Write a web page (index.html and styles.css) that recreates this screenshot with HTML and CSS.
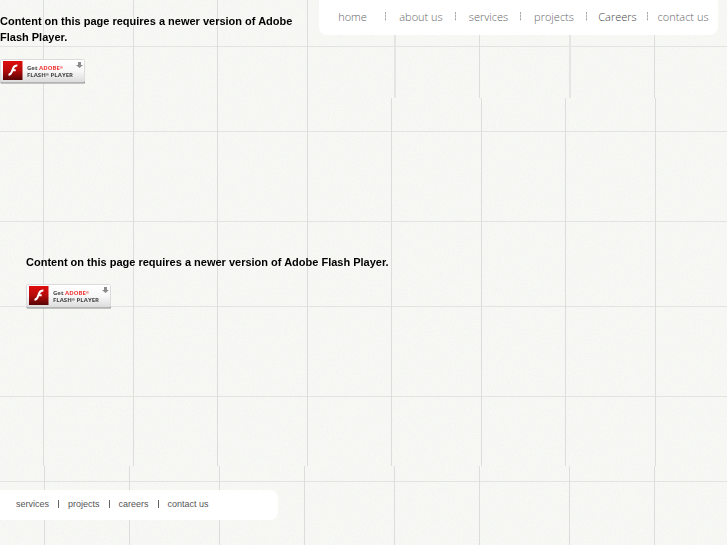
FILE: index.html
```html
<!DOCTYPE html>
<html lang="en">
<head>
<meta charset="utf-8">
<title>Home</title>
<link rel="stylesheet" href="styles.css">
</head>
<body>
<svg class="grain" aria-hidden="true">
  <filter id="grain"><feTurbulence type="fractalNoise" baseFrequency="0.6" numOctaves="2" seed="4"/></filter>
  <rect width="100%" height="100%" filter="url(#grain)"/>
</svg>
<svg class="defs" aria-hidden="true">
  <defs>
    <linearGradient id="plate" x2="0" y2="1"><stop offset="0" stop-color="#fff"/><stop offset=".5" stop-color="#f8f8f8"/><stop offset="1" stop-color="#dcdcdc"/></linearGradient>
    <linearGradient id="red" x2="0" y2="1"><stop offset="0" stop-color="#e00d0d"/><stop offset=".5" stop-color="#b60b0b"/><stop offset="1" stop-color="#560404"/></linearGradient>
    <symbol id="badge" viewBox="0 0 86 26">
      <rect x="0.500" y="2" width="84.500" height="22.500" rx="1" fill="#8d8d8d"/>
      <rect x="0.500" y="0.500" width="84" height="22.500" rx="1" fill="url(#plate)" stroke="#dcdcdc"/>
      <rect x="3" y="2" width="19.500" height="19" fill="url(#red)"/>
      <path d="M17.400 6.400c-3.400-.2-4.100 2-5 4.700-.8 2.600-1.500 4.500-3.900 4.600M11.700 11.200h4" fill="none" stroke="#fff" stroke-width="2"/>
      <path d="M78 3h3v3h2l-3.500 3L76 6h2z" fill="#8c8c8c"/>
    </symbol>
  </defs>
</svg>
<header class="header">
  <section class="notice">
    <h4>Content on this page requires a newer version of Adobe Flash Player.</h4>
    <a class="badge" href="#flash" aria-label="Get Adobe Flash Player">
      <svg viewBox="0 0 86 26"><use href="#badge"/><text x="27" y="11">Get <tspan class="brand">ADOBE<tspan class="mark" dy="-1">®</tspan></tspan></text><text x="27" y="18">FLASH<tspan class="mark" dy="-1">®</tspan><tspan dy="1"> PLAYER</tspan></text></svg>
    </a>
  </section>
  <div class="banner">
    <nav class="nav">
      <a href="#home">home</a>
      <a href="#about">about us</a>
      <a href="#services">services</a>
      <a href="#projects">projects</a>
      <a class="strong" href="#careers">Careers</a>
      <a href="#contact">contact us</a>
    </nav>
  </div>
</header>
<main class="main">
  <h4>Content on this page requires a newer version of Adobe Flash Player.</h4>
  <a class="badge" href="#flash" aria-label="Get Adobe Flash Player">
    <svg viewBox="0 0 86 26"><use href="#badge"/><text x="27" y="11">Get <tspan class="brand">ADOBE<tspan class="mark" dy="-1">®</tspan></tspan></text><text x="27" y="18">FLASH<tspan class="mark" dy="-1">®</tspan><tspan dy="1"> PLAYER</tspan></text></svg>
  </a>
</main>
<footer class="footer">
  <nav class="links">
    <a href="#services">services</a><i></i>
    <a href="#projects">projects</a><i></i>
    <a href="#careers">careers</a><i></i>
    <a href="#contact">contact us</a>
  </nav>
</footer>
</body>
</html>
```
FILE: styles.css
```css
* { box-sizing: border-box; }
body {
  --line: #dddedc;
  --soft: #e5e6e3;
  margin: 0;
  min-height: 100vh;
  display: flex;
  flex-direction: column;
  font-family: "Liberation Sans", Arial, sans-serif;
  font-size: 11px;
  line-height: 16px;
  color: #000;
  background:
    repeating-linear-gradient(transparent 0 46px, var(--soft) 46px 47px, transparent 47px 131px, var(--soft) 131px 132px, transparent 132px 175px),
    #f9faf6;
}
.grain {
  position: fixed;
  inset: 0;
  z-index: -1;
  width: 100%;
  height: 100%;
  opacity: 0.08;
}
.defs { position: absolute; width: 0; height: 0; }
.header { display: grid; grid-template-columns: 319fr 408fr; min-height: 98px; }
.notice, .main {
  background: repeating-linear-gradient(90deg, transparent 0 43px, var(--line) 43px 44px, transparent 44px 133px, var(--line) 133px 134px, transparent 134px 174px);
}
.notice { padding-top: 13px; }
.banner {
  padding-right: 9px;
  background: repeating-linear-gradient(90deg, transparent 0 75px, var(--soft) 75px 77px, transparent 77px 160px, var(--line) 160px 161px, transparent 161px 175px);
}
h4 { margin: 0 0 14px; font-size: 11px; font-weight: bold; }
.badge { display: block; width: 86px; height: 26px; }
.badge svg { display: block; width: 100%; height: 100%; }
.badge text { font: bold 6px "Open Sans", sans-serif; fill: #444; }
.badge .brand { fill: #f03a3a; }
.badge .mark { font-size: 4px; }
.nav {
  display: grid;
  grid-template-columns: 67fr 70fr 65fr 66fr 61fr 70fr;
  align-items: center;
  height: 35px;
  padding-bottom: 2px;
  border-radius: 0 0 8px 8px;
  background: #fff;
}
.nav a {
  text-align: center;
  text-decoration: none;
  white-space: nowrap;
  font: 300 11px/18px "Open Sans", sans-serif;
  color: #666;
  background: repeating-linear-gradient(#aaa 0 2px, #ddd 2px 3px) right center / 1px 9px no-repeat;
}
.nav a:last-child { background: none; }
.nav .strong { color: #444; }
.main { flex: 1; padding: 156px 26px 0; }
.footer {
  min-height: 79px;
  padding-top: 24px;
  background: repeating-linear-gradient(90deg, transparent 0 44px, var(--line) 44px 45px, transparent 45px 129px, var(--line) 129px 130px, transparent 130px 175px);
}
.links {
  display: flex;
  align-items: center;
  gap: 9px;
  width: 278px;
  height: 30px;
  padding: 0 0 2px 16px;
  border-radius: 0 8px 8px 0;
  background: #fff;
}
.links a { font-size: 9px; color: #555; text-decoration: none; }
.links i { width: 1px; height: 8px; background: #666; }
```
